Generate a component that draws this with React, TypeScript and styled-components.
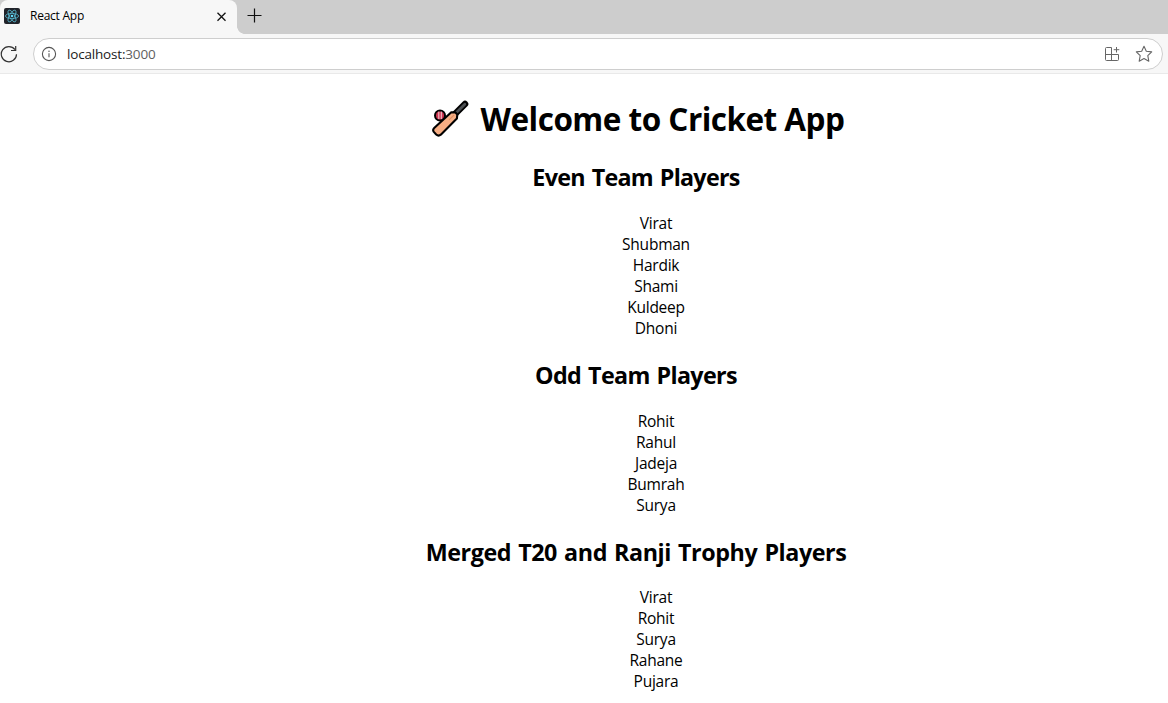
import React from 'react';
import styled, { createGlobalStyle } from 'styled-components';

const GlobalStyle = createGlobalStyle`
  html, body { margin: 0; height: 100%; overflow: hidden; background: #fff; }
  body { font-family: "Open Sans", "Noto Sans", sans-serif; color: #000; }
`;

const Window = styled.div`
  display: flex;
  flex-direction: column;
  height: 703px;
  overflow: hidden;
`;

const TabStrip = styled.div`
  display: flex;
  height: 34px;
  flex: none;
  background: #cdcdcd;
`;

const Tab = styled.div`
  box-sizing: border-box;
  display: flex;
  align-items: center;
  width: 237px;
  height: 34px;
  padding: 0 10px 2px 4px;
  background: #f7f7f7;
  border-radius: 8px 8px 0 0;
`;

const TabTitle = styled.span`
  flex: 1;
  margin-left: 10px;
  font-size: 12px;
  line-height: 16px;
  letter-spacing: -0.25px;
`;

const TabCurve = styled.div`
  width: 8px;
  height: 34px;
  background: radial-gradient(circle at 8px 0, transparent 7.6px, #f7f7f7 8.2px) 0 26px / 8px 8px no-repeat;
`;

const NewTab = styled.div`
  padding: 8px 0 0 2px;
  line-height: 0;
`;

const Toolbar = styled.div`
  box-sizing: border-box;
  display: flex;
  align-items: center;
  flex: none;
  height: 40px;
  padding: 0 5px 0 0;
  background: #f7f7f7;
  border-bottom: 1px solid #e9e9e9;
`;

const AddressBar = styled.div`
  box-sizing: border-box;
  display: flex;
  align-items: center;
  flex: 1;
  height: 32px;
  margin-left: 14px;
  padding: 0 9px 0 7px;
  border: 1px solid #cecece;
  border-radius: 16px;
  background: #fff;
`;

const Url = styled.span`
  flex: 1;
  margin-left: 10px;
  font-size: 13.5px;
  line-height: 18px;
  letter-spacing: -0.18px;
  color: #1b1b1b;
  em { font-style: normal; color: #5f5f5f; }
`;

const Actions = styled.div`
  display: flex;
  align-items: center;
  gap: 15px;
`;

const Page = styled.main`
  width: 1272px;
  text-align: center;
`;

const Title = styled.h1`
  display: flex;
  align-items: center;
  justify-content: center;
  height: 43px;
  margin: 23px 0 20.85px;
  padding-left: 3px;
  font-size: 31.5px;
  line-height: 43px;
  white-space: nowrap;
`;

const TitleText = styled.span`
  margin-left: 12px;
  letter-spacing: -0.52px;
`;

const Heading = styled.h2<{ $spacing: number }>`
  box-sizing: border-box;
  height: 32px;
  margin: 19.92px 0;
  font-size: 23.3px;
  line-height: 32px;
  letter-spacing: ${p => p.$spacing}px;
  word-spacing: 1.5px;

  &:last-of-type { padding-top: 1px; }
`;

const List = styled.ul`
  list-style: none;
  margin: 16px 0;
  padding: 0 0 0 40px;
`;

const Player = styled.li`
  height: 21px;
  font-size: 15.5px;
  line-height: 21px;
  letter-spacing: -0.24px;
`;

const ReactLogo = () => (
  <svg width="16" height="16" viewBox="0 0 16 16">
    <rect width="16" height="16" rx="2" fill="#20232a" />
    <g fill="none" stroke="#58b9d1" strokeWidth="0.8">
      <ellipse cx="8" cy="8" rx="6.6" ry="2.6" />
      <ellipse cx="8" cy="8" rx="6.6" ry="2.6" transform="rotate(60 8 8)" />
      <ellipse cx="8" cy="8" rx="6.6" ry="2.6" transform="rotate(120 8 8)" />
    </g>
    <circle cx="8" cy="8" r="1.3" fill="#61dafb" />
  </svg>
);

const CloseIcon = () => (
  <svg width="11" height="11" viewBox="0 0 11 11" stroke="#111" strokeWidth="1.3">
    <path d="M1.5 1.7 9.5 9.7M9.5 1.7 1.5 9.7" />
  </svg>
);

const PlusIcon = () => (
  <svg width="16" height="16" viewBox="0 0 16 16" stroke="#111" strokeWidth="1.2">
    <path d="M7.5 .5V14.5M.5 7.5H14.5" />
  </svg>
);

const ReloadIcon = () => (
  <svg width="19" height="18" viewBox="0 0 19 18" fill="none" stroke="#333" strokeWidth="1.2">
    <path d="M16.5 9.2A7.6 7.6 0 1 1 15 4.6" />
    <path d="M15.7 1V5.5H11" />
  </svg>
);

const InfoIcon = () => (
  <svg width="16" height="16" viewBox="0 0 16 16" fill="none" stroke="#555" strokeWidth="1.1">
    <circle cx="8" cy="8" r="6.6" />
    <path d="M8 7.2V11.2" />
    <circle cx="8" cy="5.3" r=".75" fill="#555" stroke="none" />
  </svg>
);

const AppsIcon = () => (
  <svg width="16" height="16" viewBox="0 0 16 16" fill="none" stroke="#666" strokeWidth="1">
    <path d="M7.5 1.5H2.5Q1.5 1.5 1.5 2.5V13.5Q1.5 14.5 2.5 14.5H13.5Q14.5 14.5 14.5 13.5V8.5H1.5M7.5 1.5V14.5" />
    <path d="M12.5 1V6.5M9.7 3.7H15.3" />
  </svg>
);

const StarIcon = () => (
  <svg width="18" height="18" viewBox="0 0 18 18" fill="none" stroke="#666" strokeWidth="1.1" strokeLinejoin="round">
    <path d="M9 1.3 11.3 6.2 16.7 6.9 12.8 10.7 13.8 16.2 9 13.6 4.2 16.2 5.2 10.7 1.3 6.9 6.7 6.2Z" />
  </svg>
);

const BatIcon = () => (
  <svg width="38" height="38" viewBox="0 0 38 38" strokeLinejoin="round" strokeLinecap="round">
    <path d="M24 14 34 4" stroke="#000" strokeWidth="6.6" />
    <path d="M23.5 14.5 33.8 4.2" stroke="#4b4f52" strokeWidth="2.8" />
    <circle cx="9" cy="15.4" r="5" fill="#cf3651" stroke="#000" strokeWidth="2" />
    <path d="M7.8 12V18.7M10.3 12V18.7" stroke="#f4d9df" strokeWidth=".9" />
    <path d="M20 12.4 24.2 12.2 26.3 14.5 25.9 18.6 9.8 34.7Q7.5 36.5 5.2 34.5L2.8 31.9Q1.3 29.8 3.2 28Z" fill="#f6ae84" stroke="#000" strokeWidth="2.1" />
    <path d="M22.7 15.3 18.3 19.7" stroke="#df8f63" strokeWidth="1.2" />
  </svg>
);

const teams = [
  { title: 'Even Team Players', spacing: -0.73, players: ['Virat', 'Shubman', 'Hardik', 'Shami', 'Kuldeep', 'Dhoni'] },
  { title: 'Odd Team Players', spacing: -0.66, players: ['Rohit', 'Rahul', 'Jadeja', 'Bumrah', 'Surya'] },
  { title: 'Merged T20 and Ranji Trophy Players', spacing: -0.43, players: ['Virat', 'Rohit', 'Surya', 'Rahane', 'Pujara'] },
];

export default function App() {
  return (
    <Window>
      <GlobalStyle />
      <TabStrip>
        <Tab>
          <ReactLogo />
          <TabTitle>React App</TabTitle>
          <CloseIcon />
        </Tab>
        <TabCurve />
        <NewTab><PlusIcon /></NewTab>
      </TabStrip>
      <Toolbar>
        <ReloadIcon />
        <AddressBar>
          <InfoIcon />
          <Url>localhost:<em>3000</em></Url>
          <Actions>
            <AppsIcon />
            <StarIcon />
          </Actions>
        </AddressBar>
      </Toolbar>
      <Page>
        <Title>
          <BatIcon />
          <TitleText>Welcome to Cricket App</TitleText>
        </Title>
        {teams.map(team => (
          <React.Fragment key={team.title}>
            <Heading $spacing={team.spacing}>{team.title}</Heading>
            <List>
              {team.players.map(name => <Player key={name}>{name}</Player>)}
            </List>
          </React.Fragment>
        ))}
      </Page>
    </Window>
  );
}
